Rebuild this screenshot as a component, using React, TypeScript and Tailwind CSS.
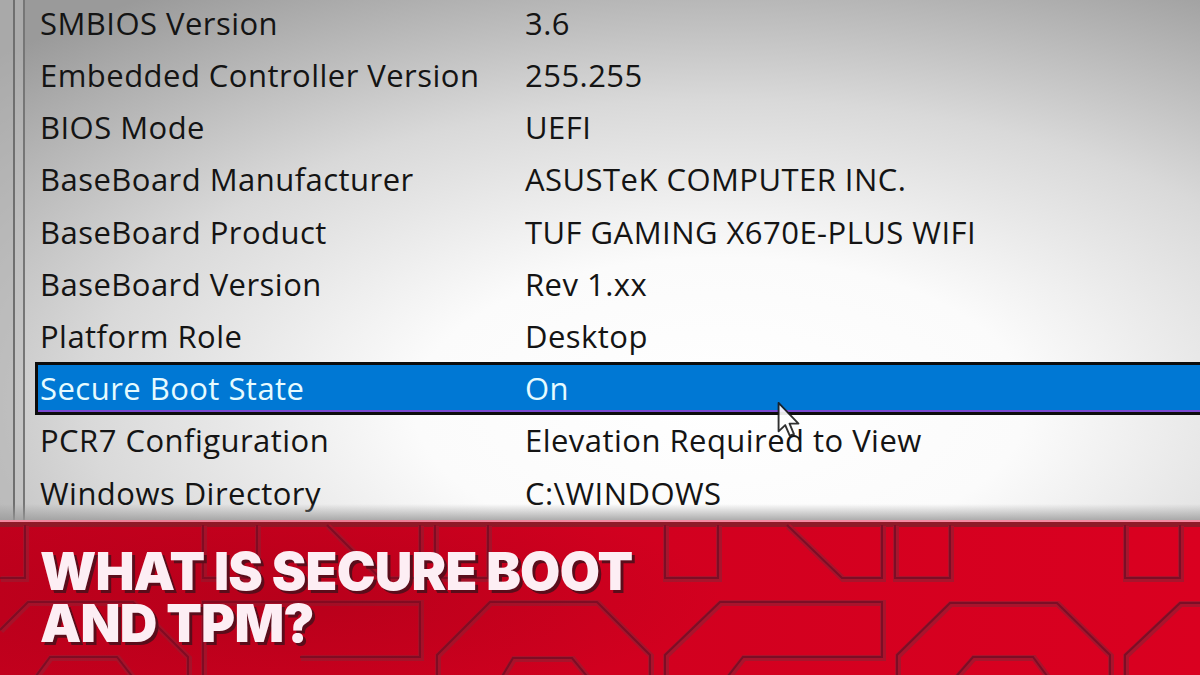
import React from 'react';

const rows = [
  { label: 'SMBIOS Version', value: '3.6' },
  { label: 'Embedded Controller Version', value: '255.255' },
  { label: 'BIOS Mode', value: 'UEFI' },
  { label: 'BaseBoard Manufacturer', value: 'ASUSTeK COMPUTER INC.' },
  { label: 'BaseBoard Product', value: 'TUF GAMING X670E-PLUS WIFI' },
  { label: 'BaseBoard Version', value: 'Rev 1.xx' },
  { label: 'Platform Role', value: 'Desktop' },
  { label: 'Secure Boot State', value: 'On', selected: true },
  { label: 'PCR7 Configuration', value: 'Elevation Required to View' },
  { label: 'Windows Directory', value: 'C:\\WINDOWS' },
];

// circuit-board style traces in the red banner (banner-local coords)
const traces = [
  'M25,5 V58 H0',
  'M203,5 V58 H257 V5',
  'M327,5 L380,58 H420 V5',
  'M435,5 V58 H488 V5',
  'M665,5 V58 H718 V5',
  'M787,5 L842,58 H882 V5',
  'M895,5 V58 H950 V5',
  'M1125,5 V58 H1180 V5',
  'M0,110 L28,82 H133 L188,137 V160',
  'M203,160 V82 H420 V137 H300',
  'M437,160 V135 L490,82 H597 L650,135 V160',
  'M665,160 V135 L720,82 H882 V137 H743 L725,160',
  'M897,160 V135 L950,83 H1057 L1110,135 V160',
  'M1125,160 V135 L1180,83 H1210',
  'M500,160 L513,138 H572 L590,160',
  'M953,160 L973,137 H1033 L1050,160',
  'M33,160 L50,137 H117 L135,160',
];

const Cursor = () => (
  <svg
    className="absolute left-[777px] top-[402px] w-[24px] h-[36px] opacity-90"
    viewBox="0 0 12 19"
  >
    <path
      d="M0.5 0.5 V15.5 L4 12.2 L6.4 17.8 L8.6 16.9 L6.3 11.4 H11 Z"
      fill="#ffffff"
      stroke="#1a1a1a"
      strokeWidth="1"
      strokeLinejoin="round"
    />
  </svg>
);

export default function App() {
  return (
    <div className="w-[1200px] h-[675px] overflow-hidden relative flex flex-col bg-[#d8001f]">
      {/* System info list */}
      <div className="h-[520px] relative flex bg-[radial-gradient(ellipse_85%_95%_at_60%_78%,#ffffff_0%,#fbfbfb_30%,#d9d9d9_62%,#9a9a9a_100%)] font-['Open_Sans','Noto_Sans',sans-serif] text-[31px] tracking-[0.015em] text-[#141414]">
        <div className="w-[13px] bg-[#b4b4b4]/60" />
        <div className="w-[2px] bg-[#6f6f6f]" />
        <div className="w-[8px] bg-[#bcbcbc]/50" />
        <div className="w-[2px] bg-[#767676]" />
        <div className="flex-1 pl-[10px] flex flex-col -mt-[3px]">
          {rows.map((r) =>
            r.selected ? (
              <div
                key={r.label}
                className="h-[52.2px] flex items-center border-[3px] border-r-0 border-[#0c0c0c] bg-[#0078d4] text-[#e6fbff] pl-[2px] shadow-[inset_0_-2px_0_#7a4ad0]"
              >
                <div className="w-[485px] whitespace-nowrap">{r.label}</div>
                <div className="whitespace-nowrap">{r.value}</div>
              </div>
            ) : (
              <div key={r.label} className="h-[52.2px] flex items-center pl-[5px]">
                <div className="w-[485px] whitespace-nowrap">{r.label}</div>
                <div className="whitespace-nowrap">{r.value}</div>
              </div>
            )
          )}
        </div>
        <div className="absolute left-0 right-0 bottom-0 h-[16px] bg-gradient-to-b from-transparent to-[#9a9a9a]/80" />
        <Cursor />
      </div>

      {/* Red title banner */}
      <div className="flex-1 relative bg-gradient-to-r from-[#c2001d] via-[#d1001f] to-[#da0020]">
        <svg className="absolute inset-0 w-full h-full" viewBox="0 0 1200 155" preserveAspectRatio="none">
          <rect x="0" y="0" width="1200" height="2" fill="#f58aa2" />
          <rect x="0" y="2" width="1200" height="5" fill="#8f1a28" />
          {traces.map((d, i) => (
            <path key={'a' + i} d={d} fill="none" stroke="#a8142c" strokeWidth="6" transform="translate(1 1)" />
          ))}
          {traces.map((d, i) => (
            <path key={'b' + i} d={d} fill="none" stroke="#7c0e26" strokeWidth="2" />
          ))}
        </svg>
        <div className="absolute left-0 top-0 w-[720px] h-full bg-[radial-gradient(ellipse_60%_70%_at_40%_50%,rgba(150,0,20,0.35),transparent)]" />
        <div className="relative pt-[26px] pl-[40px] font-['Inter','Roboto',sans-serif] font-black text-[52px] leading-[52px] tracking-[-0.015em] text-[#fdeef4] [text-shadow:3px_3px_0_#5a0d1b]">
          <div>WHAT IS SECURE BOOT</div>
          <div>AND TPM?</div>
        </div>
      </div>
    </div>
  );
}
